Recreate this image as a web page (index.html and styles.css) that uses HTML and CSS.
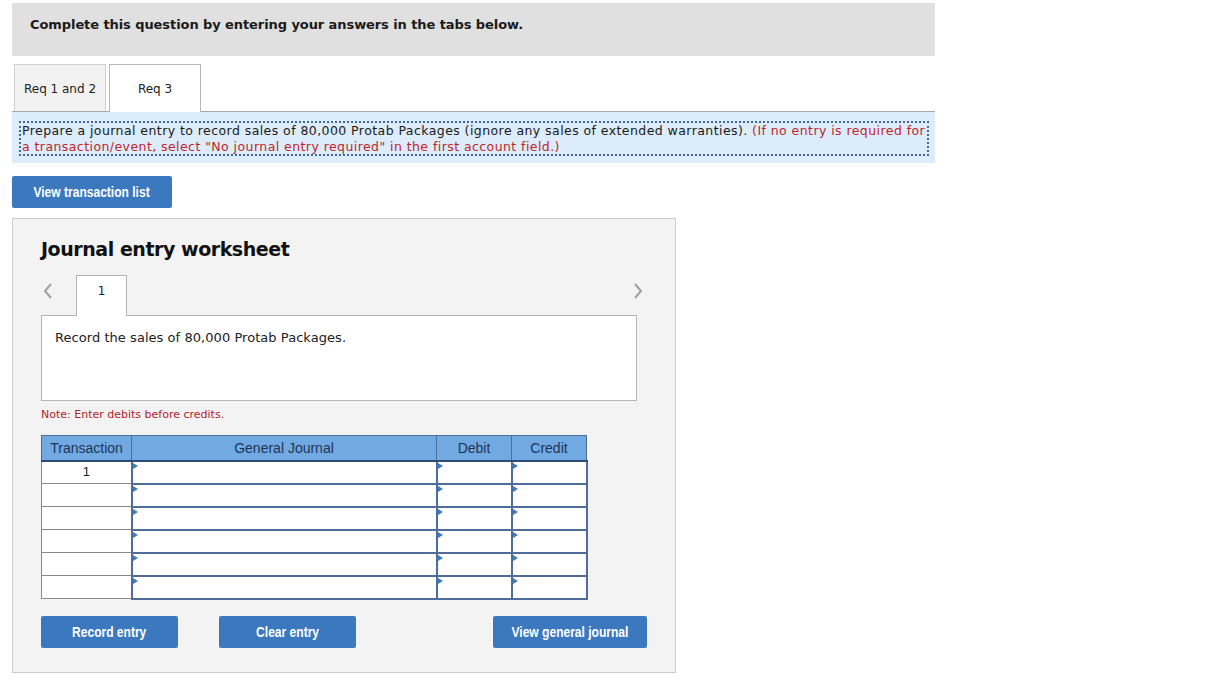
FILE: index.html
```html
<!DOCTYPE html>
<html>
<head>
<meta charset="utf-8">
<link rel="stylesheet" href="styles.css">
</head>
<body>
<div class="page">
  <div class="header">Complete this question by entering your answers in the tabs below.</div>
  <div class="tabs">
    <div class="tab tab-off">Req 1 and 2</div>
    <div class="tab tab-on">Req 3</div>
  </div>
  <div class="instructions">
    <div class="instr-inner">Prepare a journal entry to record sales of 80,000 Protab Packages (ignore any sales of extended warranties). <span class="red">(If no entry is required for a transaction/event, select "No journal entry required" in the first account field.)</span></div>
  </div>
  <button class="btn btn-list"><span class="btn-label">View transaction list</span></button>
  <div class="panel">
    <h2 class="title">Journal entry worksheet</h2>
    <div class="nav">
      <span class="arrow arrow-left"><svg width="10" height="16" viewBox="0 0 10 16"><path d="M8 1 L2 8 L8 15" fill="none" stroke="#a0a0a0" stroke-width="2"/></svg></span>
      <div class="num-tab">1</div>
      <span class="arrow arrow-right"><svg width="10" height="16" viewBox="0 0 10 16"><path d="M2 1 L8 8 L2 15" fill="none" stroke="#a0a0a0" stroke-width="2"/></svg></span>
    </div>
    <div class="desc">Record the sales of 80,000 Protab Packages.</div>
    <div class="note">Note: Enter debits before credits.</div>
    <table class="journal">
      <thead>
        <tr><th class="c-tr">Transaction</th><th class="c-gj">General Journal</th><th class="c-dr">Debit</th><th class="c-cr">Credit</th></tr>
      </thead>
      <tbody>
        <tr><td class="tr">1</td><td class="inp"></td><td class="inp"></td><td class="inp"></td></tr>
        <tr><td class="tr"></td><td class="inp"></td><td class="inp"></td><td class="inp"></td></tr>
        <tr><td class="tr"></td><td class="inp"></td><td class="inp"></td><td class="inp"></td></tr>
        <tr><td class="tr"></td><td class="inp"></td><td class="inp"></td><td class="inp"></td></tr>
        <tr><td class="tr"></td><td class="inp"></td><td class="inp"></td><td class="inp"></td></tr>
        <tr><td class="tr"></td><td class="inp"></td><td class="inp"></td><td class="inp"></td></tr>
      </tbody>
    </table>
    <div class="actions">
      <button class="btn btn-rec"><span class="btn-label">Record entry</span></button>
      <button class="btn btn-clr"><span class="btn-label">Clear entry</span></button>
      <button class="btn btn-gj"><span class="btn-label">View general journal</span></button>
    </div>
  </div>
</div>
</body>
</html>
```

FILE: styles.css
```css
* { box-sizing: border-box; }
body {
  margin: 0;
  background: #fff;
  font-family: "DejaVu Sans", Verdana, sans-serif;
  color: #111;
}
.page {
  padding: 3px 0 0 12px;
  width: 935px;
}
.header {
  height: 53px;
  background: #e0e0e0;
  padding: 14px 0 0 18px;
  font-weight: bold;
  font-size: 13px;
  line-height: 16px;
  color: #1a1a1a;
  letter-spacing: -0.08px;
}
.tabs {
  margin-top: 8px;
  display: flex;
  align-items: flex-end;
  border-bottom: 1px solid #a8a8a8;
  height: 48px;
}
.tab {
  width: 92px;
  font-size: 12px;
  display: flex;
  align-items: center;
  justify-content: center;
  padding-top: 1px;
  color: #222;
}
.tab-off {
  margin-left: 2px;
  height: 47px;
  background: #f2f2f2;
  border: 1px solid #d0d0d0;
  border-bottom: none;
}
.tab-on {
  margin-left: 3px;
  height: 48px;
  margin-bottom: -1px;
  background: #fff;
  border: 1px solid #b8b8b8;
  border-bottom: none;
}
.instructions {
  background: #dcecfa;
  padding: 9px 6px 8px 7px;
  height: 51px;
}
.instr-inner {
  border: 2px dotted #41699b;
  font-size: 12.5px;
  line-height: 15.5px;
  letter-spacing: 0.43px;
  padding: 0 0 0 1px;
  color: #1a1a1a;
}
.red { color: #c0262b; }
.btn {
  display: flex;
  align-items: center;
  justify-content: center;
  border: none;
  border-radius: 2px;
  background: #3b78bd;
  color: #fff;
  font-family: "Liberation Sans", Arial, sans-serif;
  font-weight: bold;
  font-size: 14px;
  padding: 0;
  height: 32px;
}
.btn-label {
  display: inline-block;
  white-space: nowrap;
  transform: scaleX(0.86);
}
.btn-list {
  margin-top: 13px;
  width: 160px;
}
.panel {
  margin-top: 10px;
  width: 664px;
  height: 455px;
  background: #f3f3f3;
  border: 1px solid #cccccc;
  padding: 0 0 0 28px;
}
.title {
  margin: 18px 0 0 0;
  font-size: 19px;
  line-height: 24px;
  font-weight: bold;
  letter-spacing: -0.45px;
  color: #111;
}
.nav {
  margin-top: 14px;
  height: 41px;
  display: flex;
  align-items: flex-start;
  position: relative;
  z-index: 1;
}
.arrow { display: flex; margin-top: 8px; }
.arrow-left { margin-left: 2px; }
.arrow-right { margin-left: 506px; }
.num-tab {
  margin-left: 23px;
  width: 51px;
  height: 41px;
  background: #fff;
  border: 1px solid #b5b5b5;
  border-bottom: none;
  display: flex;
  justify-content: center;
  padding-top: 8px;
  font-size: 12px;
  color: #222;
}
.desc {
  margin-top: -1px;
  width: 596px;
  height: 86px;
  background: #fff;
  border: 1px solid #b5b5b5;
  padding: 14px 0 0 13px;
  font-size: 13px;
  letter-spacing: 0.05px;
  color: #222;
}
.note {
  margin-top: 7px;
  font-size: 11px;
  color: #b5232a;
  line-height: 14px;
}
.journal {
  margin-top: 13px;
  border-collapse: collapse;
  font-family: "Liberation Sans", Arial, sans-serif;
  font-size: 13px;
}
.journal th {
  background: #71a9e3;
  color: #1d3554;
  font-weight: normal;
  font-size: 14px;
  height: 25px;
  padding: 0;
  border: 1px solid #4d6d98;
  border-bottom: 2px solid #2d4b73;
}
.c-tr { width: 90px; }
.c-gj { width: 305px; }
.c-dr { width: 75px; }
.c-cr { width: 75px; }
.journal td {
  height: 23px;
  padding: 0;
}
.journal td.tr {
  background: #fff;
  border: 1px solid #8a8a8a;
  text-align: center;
  vertical-align: top;
  padding-top: 2px;
  color: #222;
}
.journal td.inp {
  background: #fff;
  border: 2px solid #4e6e99;
  position: relative;
}
.journal td.inp::before {
  content: "";
  position: absolute;
  left: 0;
  top: 1px;
  border-left: 5px solid #3c7ac4;
  border-top: 3px solid transparent;
  border-bottom: 3px solid transparent;
}
.actions {
  margin-top: 16px;
  display: flex;
}
.btn-rec { width: 137px; }
.btn-clr { width: 137px; margin-left: 41px; }
.btn-gj { width: 154px; margin-left: 137px; }
```
